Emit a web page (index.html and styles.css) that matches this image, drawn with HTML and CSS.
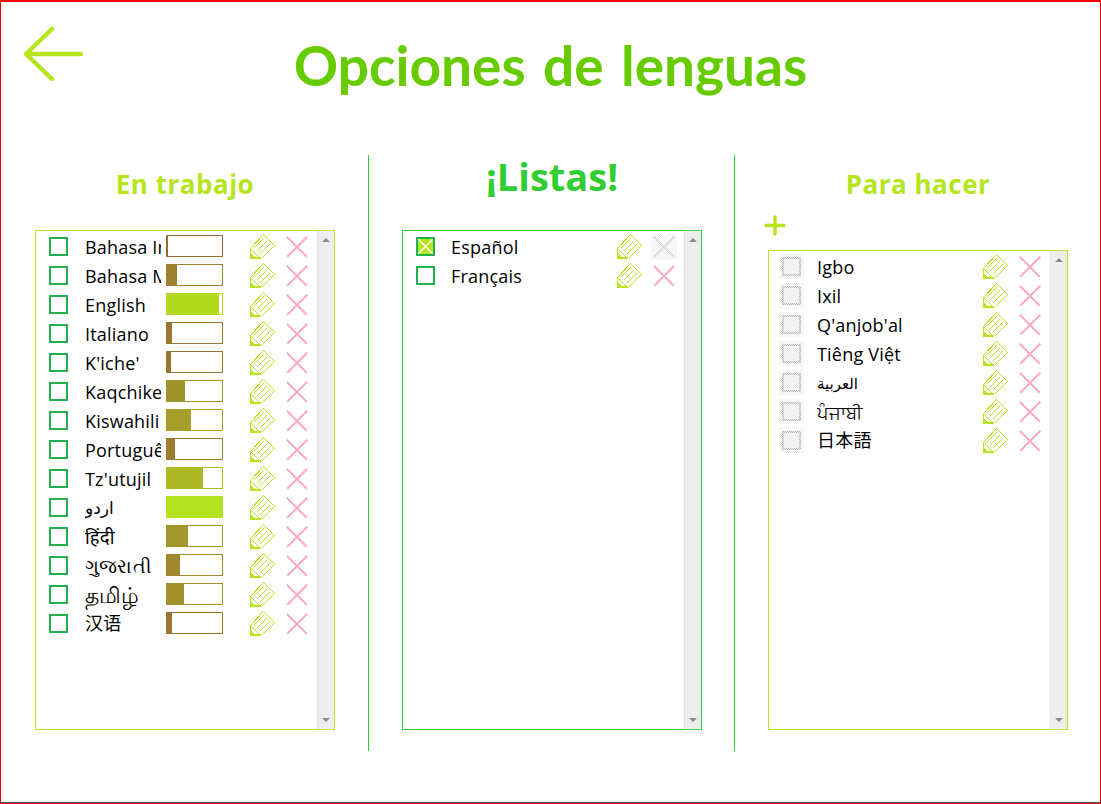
FILE: index.html
```html
<!DOCTYPE html>
<html lang="es">
<head>
  <meta charset="UTF-8" />
  <title>Opciones de lenguas</title>
  <link rel="stylesheet" href="styles.css">
</head>
<body>
  <svg class="defs" width="0" height="0">
    <symbol id="pencil" viewBox="0 0 25 25">
      <path class="pen-line" d="M0.500 14.500 L13.500 0.500 L24.500 11.500 L11.500 24.500 M0.500 14.500 L10.500 24.500" />
      <path class="pen-hatch" d="M3.500 14.500 L13.500 4.500 M6.500 17.500 L16.500 7.500 M9.500 20.500 L19.500 10.500" />
      <path class="pen-tip" d="M0 14 H1 V23 H11 V25 H0 Z M1 20 L5 23 H1 Z" />
    </symbol>
    <symbol id="cross" viewBox="0 0 22 22">
      <path d="M1 1 L21 21 M21 1 L1 21" />
    </symbol>
  </svg>

  <div class="page">
    <header class="top">
      <a class="back" href="#">
        <svg width="60" height="56" viewBox="0 0 60 56">
          <path d="M28 3 L2 28 L28 53 M2 28 L57 28" />
        </svg>
      </a>
      <h1>Opciones de lenguas</h1>
    </header>

    <main class="columns">
      <section class="col">
        <h2 class="col-title lime">En trabajo</h2>
        <div class="box lime-box">
          <ul class="rows">
            <li class="row"><span class="check"></span><span class="name">Bahasa Indonesia</span><span class="bar" style="--w:1px;--c:#996b33"></span><span class="tools"><svg class="pen"><use href="#pencil"/></svg><svg class="del"><use href="#cross"/></svg></span></li>
            <li class="row"><span class="check"></span><span class="name">Bahasa Melayu</span><span class="bar" style="--w:10px;--c:#9e812f"></span><span class="tools"><svg class="pen"><use href="#pencil"/></svg><svg class="del"><use href="#cross"/></svg></span></li>
            <li class="row"><span class="check"></span><span class="name">English</span><span class="bar" style="--w:52px;--c:#b2db1f"></span><span class="tools"><svg class="pen"><use href="#pencil"/></svg><svg class="del"><use href="#cross"/></svg></span></li>
            <li class="row"><span class="check"></span><span class="name">Italiano</span><span class="bar" style="--w:5px;--c:#9b7631"></span><span class="tools"><svg class="pen"><use href="#pencil"/></svg><svg class="del"><use href="#cross"/></svg></span></li>
            <li class="row"><span class="check"></span><span class="name">K'iche'</span><span class="bar" style="--w:4px;--c:#9b7431"></span><span class="tools"><svg class="pen"><use href="#pencil"/></svg><svg class="del"><use href="#cross"/></svg></span></li>
            <li class="row"><span class="check"></span><span class="name">Kaqchikel</span><span class="bar" style="--w:18px;--c:#a2922c"></span><span class="tools"><svg class="pen"><use href="#pencil"/></svg><svg class="del"><use href="#cross"/></svg></span></li>
            <li class="row"><span class="check"></span><span class="name">Kiswahili</span><span class="bar" style="--w:24px;--c:#a59f2a"></span><span class="tools"><svg class="pen"><use href="#pencil"/></svg><svg class="del"><use href="#cross"/></svg></span></li>
            <li class="row"><span class="check"></span><span class="name">Português</span><span class="bar" style="--w:8px;--c:#9d7c30"></span><span class="tools"><svg class="pen"><use href="#pencil"/></svg><svg class="del"><use href="#cross"/></svg></span></li>
            <li class="row"><span class="check"></span><span class="name">Tz'utujil</span><span class="bar" style="--w:36px;--c:#abb925"></span><span class="tools"><svg class="pen"><use href="#pencil"/></svg><svg class="del"><use href="#cross"/></svg></span></li>
            <li class="row"><span class="check"></span><span class="name arabic">اردو</span><span class="bar" style="--w:55px;--c:#b4e21e"></span><span class="tools"><svg class="pen"><use href="#pencil"/></svg><svg class="del"><use href="#cross"/></svg></span></li>
            <li class="row"><span class="check"></span><span class="name indic">हिंदी</span><span class="bar" style="--w:21px;--c:#a3982b"></span><span class="tools"><svg class="pen"><use href="#pencil"/></svg><svg class="del"><use href="#cross"/></svg></span></li>
            <li class="row"><span class="check"></span><span class="name indic">ગુજરાતી</span><span class="bar" style="--w:13px;--c:#9f872e"></span><span class="tools"><svg class="pen"><use href="#pencil"/></svg><svg class="del"><use href="#cross"/></svg></span></li>
            <li class="row"><span class="check"></span><span class="name tamil">தமிழ்</span><span class="bar" style="--w:17px;--c:#a1902c"></span><span class="tools"><svg class="pen"><use href="#pencil"/></svg><svg class="del"><use href="#cross"/></svg></span></li>
            <li class="row"><span class="check"></span><span class="name cjk-sc">汉语</span><span class="bar" style="--w:5px;--c:#9b7631"></span><span class="tools"><svg class="pen"><use href="#pencil"/></svg><svg class="del"><use href="#cross"/></svg></span></li>
          </ul>
          <div class="scroll"><i class="up"></i><i class="down"></i></div>
        </div>
      </section>

      <section class="col">
        <h2 class="col-title big">¡Listas!</h2>
        <div class="box green-box">
          <ul class="rows plain">
            <li class="row"><span class="check on"><svg width="15" height="15" viewBox="0 0 15 15"><path d="M0 0 L15 15 M15 0 L0 15" /></svg></span><span class="name">Español</span><span class="tools"><svg class="pen"><use href="#pencil"/></svg><span class="del-off"><svg class="del"><use href="#cross"/></svg></span></span></li>
            <li class="row"><span class="check"></span><span class="name">Français</span><span class="tools"><svg class="pen"><use href="#pencil"/></svg><svg class="del"><use href="#cross"/></svg></span></li>
          </ul>
          <div class="scroll"><i class="up"></i><i class="down"></i></div>
        </div>
      </section>

      <section class="col">
        <h2 class="col-title lime">Para hacer</h2>
        <a class="add" href="#">
          <svg width="22" height="21" viewBox="0 0 22 21"><path d="M2 10.500 L20 10.500 M11 2 L11 19" /></svg>
        </a>
        <div class="box lime-box short">
          <ul class="rows plain">
            <li class="row"><span class="check off"><b></b></span><span class="name">Igbo</span><span class="tools"><svg class="pen"><use href="#pencil"/></svg><svg class="del"><use href="#cross"/></svg></span></li>
            <li class="row"><span class="check off"><b></b></span><span class="name">Ixil</span><span class="tools"><svg class="pen"><use href="#pencil"/></svg><svg class="del"><use href="#cross"/></svg></span></li>
            <li class="row"><span class="check off"><b></b></span><span class="name">Q'anjob'al</span><span class="tools"><svg class="pen"><use href="#pencil"/></svg><svg class="del"><use href="#cross"/></svg></span></li>
            <li class="row"><span class="check off"><b></b></span><span class="name">Tiêng Việt</span><span class="tools"><svg class="pen"><use href="#pencil"/></svg><svg class="del"><use href="#cross"/></svg></span></li>
            <li class="row"><span class="check off"><b></b></span><span class="name arabic-small">العربية</span><span class="tools"><svg class="pen"><use href="#pencil"/></svg><svg class="del"><use href="#cross"/></svg></span></li>
            <li class="row"><span class="check off"><b></b></span><span class="name">ਪੰਜਾਬੀ</span><span class="tools"><svg class="pen"><use href="#pencil"/></svg><svg class="del"><use href="#cross"/></svg></span></li>
            <li class="row"><span class="check off"><b></b></span><span class="name cjk-jp">日本語</span><span class="tools"><svg class="pen"><use href="#pencil"/></svg><svg class="del"><use href="#cross"/></svg></span></li>
          </ul>
          <div class="scroll"><i class="up"></i><i class="down"></i></div>
        </div>
      </section>
    </main>

    <div class="foot"></div>
  </div>
</body>
</html>
```

FILE: styles.css
```css
* {
  box-sizing: border-box;
}
html, body {
  margin: 0;
  height: 100%;
}
body {
  font-family: "Open Sans", "Noto Sans", "DejaVu Sans", sans-serif;
  background: #fff;
  color: #000;
  overflow: hidden;
}
a {
  color: inherit;
  text-decoration: none;
}
.defs {
  position: absolute;
}
.page {
  height: 804px;
  display: flex;
  flex-direction: column;
  border: 1px solid #f00;
  border-top-width: 2px;
}

.top {
  height: 153px;
  flex: none;
  display: grid;
  grid-template-columns: 1fr auto 1fr;
  align-items: start;
}
.back {
  display: block;
  padding: 24px 0 0 23px;
}
.back svg {
  display: block;
}
.back path {
  fill: none;
  stroke: #b5e61d;
  stroke-width: 4.500;
  stroke-linecap: round;
  stroke-linejoin: round;
}
h1 {
  margin: 29px 0 0;
  font-family: "Lato", "Open Sans", sans-serif;
  font-size: 55px;
  line-height: 68px;
  font-weight: 700;
  word-spacing: 4px;
  color: #66cc00;
}

.columns {
  flex: 1;
  display: grid;
  grid-template-columns: 367px 366px 1fr;
  padding-left: 1px;
  padding-bottom: 51px;
}
.col {
  display: flex;
  flex-direction: column;
  padding-left: 33px;
  border-right: 1px solid #32cd32;
}
.col:last-child {
  border-right: none;
}
.col-title {
  width: 300px;
  height: 60px;
  margin: 0;
  font-size: 26px;
  line-height: 58px;
  font-weight: 700;
  text-align: center;
}
.col-title.lime {
  color: #b5e61d;
  letter-spacing: 0.500px;
}
.col-title.big {
  height: 75px;
  font-size: 38px;
  line-height: 42px;
  color: #32cd32;
}
.col-title.lime + .box {
  margin-top: 15px;
}
.add {
  display: block;
  height: 35px;
  margin-left: -4px;
}
.add svg {
  display: block;
}
.add path {
  fill: none;
  stroke: #b5e61d;
  stroke-width: 3.500;
  stroke-linecap: round;
}

.box {
  width: 300px;
  height: 500px;
  display: flex;
  border: 1px solid;
}
.box.short {
  height: 480px;
}
.lime-box {
  border-color: #b5e61d;
}
.green-box {
  border-color: #32cd32;
}
.rows {
  flex: 1;
  list-style: none;
  margin: 0;
  padding: 1px 10px 0 13px;
}
.row {
  height: 29px;
  display: flex;
  align-items: center;
  font-size: 18px;
  letter-spacing: 0.200px;
}
.check {
  width: 19px;
  height: 19px;
  flex: none;
  border: 2px solid #22b14c;
}
.check.on {
  background: #b5e61d;
}
.check.on svg {
  display: block;
}
.check.on path {
  stroke: #fff;
  stroke-width: 1.500;
}
.check.off {
  width: 25px;
  height: 25px;
  margin: 0 -3px;
  padding: 3px;
  border: none;
  background: repeating-conic-gradient(#eeeeee 0 25%, #fff 0 50%) 0 0 / 2px 2px;
}
.check.off b {
  display: block;
  height: 19px;
  border: 2px solid transparent;
  background:
    repeating-conic-gradient(#eeeeee 0 25%, #f8f8f8 0 50%) 0 0 / 2px 2px padding-box,
    repeating-conic-gradient(#b4b4b4 0 25%, #eeeeee 0 50%) 0 0 / 2px 2px border-box;
}
.name {
  width: 76px;
  margin-left: 17px;
  flex: none;
  overflow: hidden;
  white-space: nowrap;
}
.plain .name {
  width: 138px;
  margin-left: 16px;
}
.arabic {
  font-size: 17px;
}
.arabic-small {
  font-size: 15px;
}
.indic {
  font-size: 18.500px;
}
.tamil {
  font-size: 22px;
}
.cjk-sc,
.cjk-jp {
  padding-bottom: 3px;
}
.cjk-sc {
  font-family: "Noto Sans CJK SC", sans-serif;
}
.cjk-jp {
  font-family: "Noto Sans CJK JP", sans-serif;
}
.bar {
  width: 57px;
  height: 22px;
  margin: -1px 0 0 5px;
  flex: none;
  border: 1px solid var(--c);
  background: linear-gradient(var(--c), var(--c)) no-repeat 0 0 / var(--w) 100%;
}
.tools {
  margin-left: auto;
  display: flex;
  align-items: center;
}
.pen {
  width: 25px;
  height: 25px;
  shape-rendering: crispEdges;
}
.pen-line,
.pen-hatch {
  fill: none;
  stroke: #b5e61d;
}
.pen-tip {
  fill: #b5e61d;
}
.del {
  display: block;
  width: 22px;
  height: 22px;
  margin-left: 11px;
  fill: none;
  stroke: #ffaec9;
  stroke-width: 2;
  shape-rendering: crispEdges;
}
.del-off {
  margin: -2px -2px -2px 9px;
  padding: 2px;
  background: repeating-conic-gradient(#eeeeee 0 25%, #fff 0 50%) 0 0 / 2px 2px;
}
.del-off .del {
  margin-left: 0;
  stroke: #dddddd;
}

.scroll {
  width: 16px;
  flex: none;
  display: flex;
  flex-direction: column;
  justify-content: space-between;
  align-items: center;
  padding: 7px 0;
  background: #eeeeee;
  box-shadow: -1px 0 1px #e4e4e4;
}
.scroll i {
  width: 0;
  height: 0;
  border-left: 4px solid transparent;
  border-right: 4px solid transparent;
}
.scroll .up {
  border-bottom: 4px solid #8a8a8a;
}
.scroll .down {
  border-top: 4px solid #8a8a8a;
}

.foot {
  height: 1px;
  flex: none;
  background: #4f5b73;
}
```
